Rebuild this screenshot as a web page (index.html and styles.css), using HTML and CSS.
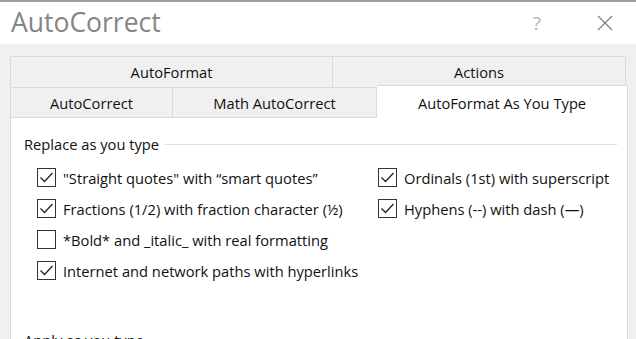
FILE: index.html
```html
<!DOCTYPE html>
<html lang="en">
<head>
    <meta charset="UTF-8">
    <title>AutoCorrect</title>
    <link rel="stylesheet" href="styles.css">
</head>
<body>
    <div class="dialog">
        <div class="titlebar">
            <span class="title">AutoCorrect</span>
            <span class="help">?</span>
            <svg class="close" width="16" height="16" viewBox="0 0 16 16">
                <path d="M1 1 L15 15 M15 1 L1 15" stroke="#7a7a7a" stroke-width="1.1" fill="none"/>
            </svg>
        </div>

        <div class="body">
            <div class="tabs">
                <div class="tab-row">
                    <div class="tab w-autoformat">AutoFormat</div>
                    <div class="tab w-actions">Actions</div>
                </div>
                <div class="tab-row">
                    <div class="tab w-autocorrect">AutoCorrect</div>
                    <div class="tab w-math">Math AutoCorrect</div>
                    <div class="tab w-asyoutype active">AutoFormat As You Type</div>
                </div>
            </div>

            <div class="panel">
                <div class="group-label">
                    <span>Replace as you type</span>
                    <span class="rule"></span>
                </div>

                <div class="options">
                    <label class="option">
                        <span class="box checked"></span>"Straight quotes" with “smart quotes”
                    </label>
                    <label class="option">
                        <span class="box checked"></span>Ordinals (1st) with superscript
                    </label>
                    <label class="option">
                        <span class="box checked"></span>Fractions (1/2) with fraction character (½)
                    </label>
                    <label class="option">
                        <span class="box checked"></span>Hyphens (--) with dash (—)
                    </label>
                    <label class="option">
                        <span class="box"></span>*Bold* and _italic_ with real formatting
                    </label>
                    <span></span>
                    <label class="option">
                        <span class="box checked"></span>Internet and network paths with hyperlinks
                    </label>
                </div>

                <div class="group-label next">
                    <span>Apply as you type</span>
                    <span class="rule"></span>
                </div>
            </div>
        </div>
    </div>
</body>
</html>
```

FILE: styles.css
```css
html, body {
    margin: 0;
    height: 100%;
    overflow: hidden;
}

body {
    font-family: "Open Sans", "Noto Sans", sans-serif;
    font-size: 14.7px;
    color: #111;
    background: #f0f0f0;
}

.dialog {
    border-top: 2px solid #9d9d9d;
}

.titlebar {
    height: 42px;
    background: #fff;
    display: flex;
    align-items: center;
    padding-left: 11px;
}

.title {
    font-size: 26.5px;
    color: #858585;
    flex: 1;
    padding-bottom: 2px;
}

.help {
    font-size: 19px;
    color: #b5b5b5;
    margin-right: 56px;
}

.close {
    margin-right: 23px;
}

.body {
    padding: 12px 8px 0 10px;
}

.tab-row {
    display: flex;
    height: 31px;
}

.tab {
    box-sizing: border-box;
    display: flex;
    align-items: center;
    justify-content: center;
    border: 1px solid #dadada;
    border-left: none;
    background: #f0f0f0;
}

.tab-row:first-child .tab {
    border-bottom: none;
}

.tab:first-child {
    border-left: 1px solid #dadada;
}

.w-autoformat { width: 323px; }
.w-actions { width: 293px; }
.w-autocorrect { width: 163px; }
.w-math { width: 204px; }
.w-asyoutype { width: 251px; }

.tab.active {
    background: #fff;
    border-bottom: none;
    height: 34px;
    margin-top: -2px;
    padding-top: 1px;
    position: relative;
    z-index: 1;
}

.panel {
    background: #fff;
    border: 1px solid #dadada;
    border-top: none;
    height: 400px;
    padding: 16px 10px 0 13px;
}

.group-label {
    display: flex;
    align-items: center;
    gap: 6px;
}

.rule {
    flex: 1;
    border-top: 1px solid #dedede;
    margin-top: 1px;
}

.options {
    display: grid;
    grid-template-columns: 341px auto;
    grid-auto-rows: 31px;
    margin: 8px 0 0 13px;
}

.option {
    display: flex;
    align-items: center;
    gap: 7px;
    white-space: nowrap;
}

.box {
    box-sizing: border-box;
    width: 19px;
    height: 19px;
    border: 1px solid #333;
    background: #fff;
    flex: none;
}

.box.checked {
    background: #fff url("data:image/svg+xml;utf8,<svg xmlns='http://www.w3.org/2000/svg' width='17' height='17' viewBox='0 0 17 17'><path d='M2.5 8.5 L6.5 12.5 L14.5 4' stroke='%23222' stroke-width='1.3' fill='none'/></svg>") no-repeat center;
}

.group-label.next {
    margin-top: 44px;
}
```
